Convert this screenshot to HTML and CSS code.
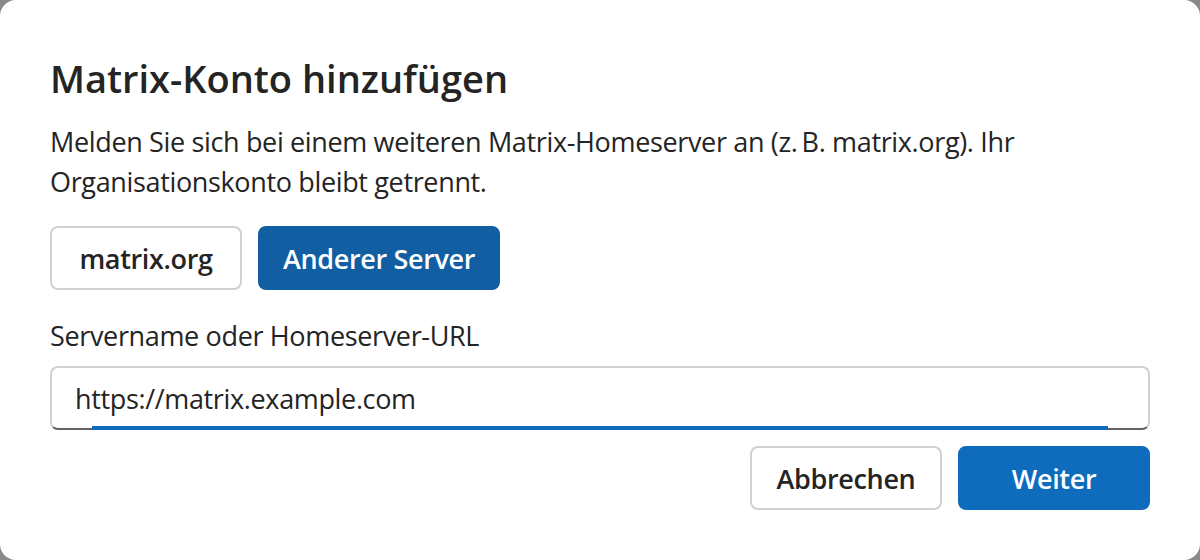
FILE: index.html
```html
<!DOCTYPE html>
<html lang="de">
<head>
<meta charset="utf-8">
<title>Matrix-Konto hinzufügen</title>
<link rel="stylesheet" href="styles.css">
</head>
<body>
<div class="dialog">
  <h2 class="title">Matrix-Konto hinzufügen</h2>
  <p class="desc">Melden Sie sich bei einem weiteren Matrix-Homeserver an (z.&#8201;B. matrix.org). Ihr Organisationskonto bleibt getrennt.</p>
  <div class="choices">
    <button class="btn secondary">matrix.org</button>
    <button class="btn selected">Anderer Server</button>
  </div>
  <label class="label" for="server">Servername oder Homeserver-URL</label>
  <div class="input">
    <input id="server" type="text" value="https://matrix.example.com">
  </div>
  <div class="actions">
    <button class="btn secondary">Abbrechen</button>
    <button class="btn primary">Weiter</button>
  </div>
</div>
</body>
</html>
```

FILE: styles.css
```css
* { box-sizing: border-box; }
html, body { margin: 0; height: 100%; }
body {
  background: #8a8a8a;
  font-family: "Open Sans", "Noto Sans", sans-serif;
  color: #242424;
}
.dialog {
  width: 1200px;
  height: 560px;
  background: #ffffff;
  border-radius: 16px;
  padding: 50px 50px 50px 50px;
  display: flex;
  flex-direction: column;
}
.title {
  margin: 0;
  font-size: 38px;
  line-height: 56px;
  font-weight: 600;
  letter-spacing: 0;
}
.desc {
  margin: 16px 0 0;
  font-size: 27px;
  line-height: 40px;
  font-weight: 400;
  letter-spacing: -0.35px;
}
.choices {
  margin-top: 24px;
  display: flex;
  gap: 16px;
}
.btn {
  height: 64px;
  min-width: 192px;
  padding: 0 23px;
  border-radius: 8px;
  border: 2px solid #d1d1d1;
  background: #ffffff;
  color: #242424;
  font-family: inherit;
  font-size: 27px;
  font-weight: 600;
  letter-spacing: -0.35px;
}
.btn.selected {
  background: #115ea3;
  border-color: #115ea3;
  color: #ffffff;
}
.btn.primary {
  background: #0f6cbd;
  border-color: #0f6cbd;
  color: #ffffff;
}
.label {
  margin-top: 26px;
  font-size: 27px;
  line-height: 40px;
  letter-spacing: -0.35px;
}
.input {
  margin-top: 10px;
  position: relative;
  height: 64px;
  border: 2px solid #d1d1d1;
  border-bottom-color: #616161;
  border-radius: 8px;
  background: #fff;
}
.input::after {
  content: "";
  position: absolute;
  left: 40px;
  right: 40px;
  bottom: -2px;
  height: 4px;
  background: #0f6cbd;
}
.input input {
  width: 100%;
  height: 100%;
  border: 0;
  outline: none;
  background: transparent;
  padding: 0 23px;
  font-family: inherit;
  font-size: 27px;
  letter-spacing: -0.35px;
  color: #242424;
}
.actions {
  margin-top: 16px;
  display: flex;
  justify-content: flex-end;
  gap: 16px;
}
```
